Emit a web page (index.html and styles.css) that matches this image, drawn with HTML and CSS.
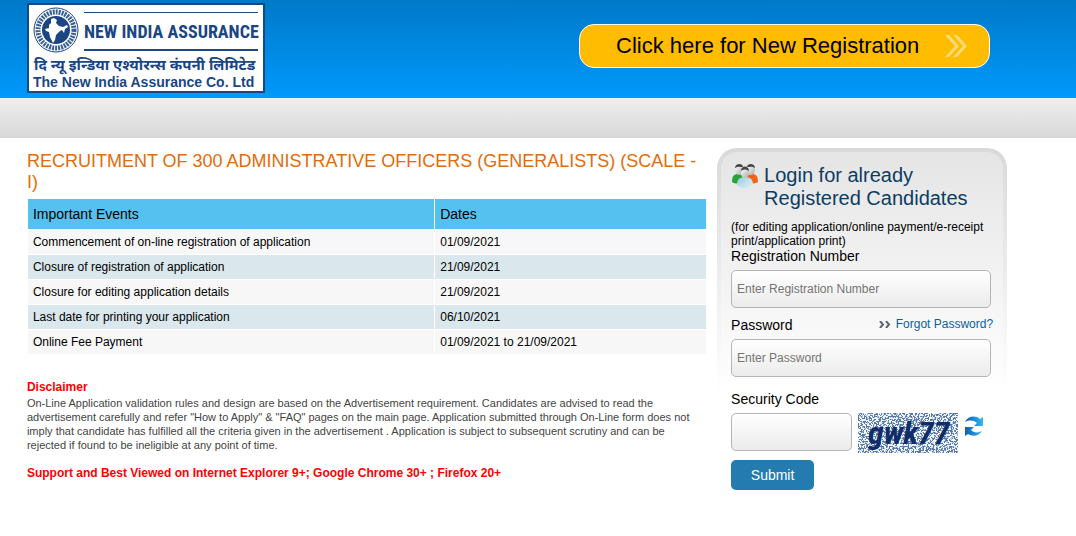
FILE: index.html
```
<!DOCTYPE html>
<html lang="en">
<head>
	<meta charset="utf-8">
	<meta name="viewport" content="width=device-width, initial-scale=1">
	<title>The New India Assurance Co. Ltd</title>
	<link rel="stylesheet" href="styles.css">
</head>
<body>
	<header class="header">
		<div class="wrap header-in">
			<svg class="logo" width="238" height="90" viewBox="0 0 238 90" role="img" aria-label="New India Assurance">
				<rect x="1" y="1" width="236" height="88" fill="#fff" stroke="#1a4684" stroke-width="2"/>
				<circle cx="29" cy="27" r="22" fill="#fff" stroke="#1a4684"/>
				<circle cx="29" cy="27" r="18" fill="none" stroke="#3a609a" stroke-width="5" stroke-dasharray="2 1"/>
				<circle cx="29" cy="27" r="14" fill="#1a4684"/>
				<path fill="#fff" d="M24 16l3-1 3 2-1 3 3 3 4 1 4-2 1 2-3 2-1 4-2-3-2 1-4 4-1 5-2 3-3-6-1-5-3-1-1-2 4-1 0-3 2-2z"/>
				<path stroke="#1a4684" d="M57 9.500h174"/>
				<path stroke="#1a4684" stroke-width="2" d="M57 47h174"/>
				<text class="logo-name" x="57" y="35">NEW INDIA ASSURANCE</text>
				<text class="logo-hindi" x="7" y="67">दि न्यू इन्डिया एश्योरन्स कंपनी लिमिटेड</text>
				<text class="logo-sub" x="6" y="84">The New India Assurance Co. Ltd</text>
			</svg>
			<a class="register" href="#">
				<span>Click here for New Registration</span>
				<svg width="22" height="22" viewBox="0 0 22 22" fill="#ffdb78"><path d="M0 0h4l10 11L4 22H0l10-11zM8 0h4l10 11-10 11H8l10-11z"/></svg>
			</a>
		</div>
	</header>
	<div class="bar"></div>
	<main class="wrap content">
		<section class="info">
			<h1>RECRUITMENT OF 300 ADMINISTRATIVE OFFICERS (GENERALISTS) (SCALE - I)</h1>
			<table class="events">
				<thead>
					<tr><th class="ev">Important Events</th><th>Dates</th></tr>
				</thead>
				<tbody>
					<tr><td>Commencement of on-line registration of application</td><td>01/09/2021</td></tr>
					<tr><td>Closure of registration of application</td><td>21/09/2021</td></tr>
					<tr><td>Closure for editing application details</td><td>21/09/2021</td></tr>
					<tr><td>Last date for printing your application</td><td>06/10/2021</td></tr>
					<tr><td>Online Fee Payment</td><td>01/09/2021 to 21/09/2021</td></tr>
				</tbody>
			</table>
			<h2 class="red">Disclaimer</h2>
			<p class="disclaimer">On-Line Application validation rules and design are based on the Advertisement requirement. Candidates are advised to read the advertisement carefully and refer "How to Apply" &amp; "FAQ" pages on the main page. Application submitted through On-Line form does not imply that candidate has fulfilled all the criteria given in the advertisement . Application is subject to subsequent scrutiny and can be rejected if found to be ineligible at any point of time.</p>
			<p class="red support">Support and Best Viewed on Internet Explorer 9+; Google Chrome 30+ ; Firefox 20+</p>
		</section>
		<form class="login" action="#" method="post">
			<div class="login-head">
				<svg width="28" height="24" viewBox="0 0 28 24">
					<defs>
						<linearGradient id="hd" x1="0" y1="0" x2="1" y2="1"><stop offset="0" stop-color="#fff"/><stop offset="1" stop-color="#aaa"/></linearGradient>
						<linearGradient id="bd" x1="0" y1="0" x2="1" y2="1"><stop offset="0" stop-color="#9cc9dc"/><stop offset="1" stop-color="#dff4fc"/></linearGradient>
					</defs>
					<path fill="#27a53a" d="M1 18c0-6 2-8 6-8s6 2 6 8c-4 2-9 2-12 0z"/>
					<path fill="#f2641c" d="M15 18c0-6 2-8 6-8s6 2 6 8c-4 2-9 2-12 0z"/>
					<ellipse cx="8" cy="6" rx="4" ry="5" fill="url(#hd)"/>
					<path fill="#444" d="M4 4c0-5 8-5 8-1-3 0-5-1-8 1z"/>
					<ellipse cx="20" cy="6" rx="4" ry="5" fill="url(#hd)"/>
					<path fill="#444" d="M16 3c0-4 8-4 8 1-3-2-5-1-8-1z"/>
					<path fill="url(#bd)" d="M6 21c0-6 3-8 8-8s8 2 8 8c-4 4-12 4-16 0z"/>
					<ellipse cx="14" cy="9" rx="4" ry="5" fill="url(#hd)"/>
					<path fill="#444" d="M10 7c0-6 8-6 8 0-3-2-5-2-8 0z"/>
				</svg>
				<h2>Login for already Registered Candidates</h2>
			</div>
			<p class="note">(for editing application/online payment/e-receipt print/application print)</p>
			<label for="regno">Registration Number</label>
			<input id="regno" name="regno" type="text" placeholder="Enter Registration Number">
			<div class="pass-row">
				<label for="pass">Password</label>
				<a href="#">
					<svg width="12" height="7" viewBox="0 0 12 7" fill="none" stroke="#5b6573" stroke-width="2"><path d="M1 0l3 3.500L1 7M7 0l3 3.500L7 7"/></svg>
					Forgot Password?
				</a>
			</div>
			<input id="pass" name="pass" type="password" placeholder="Enter Password">
			<label class="code-label" for="code">Security Code</label>
			<div class="code-row">
				<input id="code" name="code" type="text">
				<svg class="captcha" width="100" height="40" viewBox="0 0 100 40">
					<filter id="noise" x="0" y="0" width="1" height="1">
						<feTurbulence type="fractalNoise" baseFrequency=".6" numOctaves="2" seed="7"/>
						<feColorMatrix values="0 0 0 0 .1  0 0 0 0 .18  0 0 0 0 .42  14 0 0 0 -6.600"/>
					</filter>
					<rect width="100" height="40" fill="#f2fbff"/>
					<rect width="100" height="40" filter="url(#noise)"/>
					<text x="10" y="31">gwk77</text>
				</svg>
				<button class="refresh" type="button" aria-label="Refresh code">
					<svg width="20" height="20" viewBox="0 0 20 20">
						<defs><linearGradient id="rf" x1="0" x2="1"><stop offset="0" stop-color="#0a5fb4"/><stop offset="1" stop-color="#35b8f2"/></linearGradient></defs>
						<path fill="url(#rf)" d="M1 6c3-6 10-7 15-3l3-2v9h-9l3-3c-4-3-8-3-12-1z"/>
						<path fill="url(#rf)" d="M18 15c-3 5-9 6-14 3l-3 2v-9h9l-3 3c3 3 7 3 11 1z"/>
					</svg>
				</button>
			</div>
			<button class="submit" type="submit">Submit</button>
		</form>
	</main>
</body>
</html>
```
FILE: styles.css
```
*{box-sizing:border-box;}
body{
	margin:0;
	background:#fff;
	color:#000;
	font-family:"Liberation Sans", Arial, sans-serif;
	font-size:12px;
}
h1,h2,p{margin:0;font-weight:normal;}
a{text-decoration:none;}
svg{display:block;flex:none;}
.wrap{width:95%;margin:0 auto;}

/* header */
.header{background:linear-gradient(#0079c8,#0099fb);}
.header-in{
	display:flex;
	justify-content:space-between;
	align-items:flex-start;
	padding:3px 59px 5px 0;
}
.logo text{fill:#1a4684;font-weight:bold;}
.logo .logo-name{font-family:"Liberation Sans Narrow", "Roboto Condensed", "Open Sans Condensed", "Liberation Sans", sans-serif;font-size:18px;}
.logo .logo-hindi{font-family:"Noto Sans Devanagari", "Noto Sans", sans-serif;font-size:15px;}
.logo .logo-sub{font-size:14px;}
.register{
	display:flex;
	justify-content:space-between;
	align-items:center;
	width:411px;
	height:44px;
	margin-top:21px;
	padding:0 22px 0 36px;
	border:1px solid #fff;
	border-radius:15px;
	background:#ffbc00;
	color:#000;
	font-size:22px;
}
.bar{height:40px;background:linear-gradient(#efefef,#d7d7d7);}

/* left column */
.content{
	display:flex;
	align-items:flex-start;
	gap:10px;
	padding:10px 42px 10px 0;
}
.info{flex:1;}
.info h1{
	padding-top:3px;
	color:#e36c0a;
	font-size:18px;
	line-height:21px;
}
.events{
	width:100%;
	margin-top:5px;
	border-spacing:1px;
	font-size:12px;
}
.events th,.events td{padding:0 5px;text-align:left;}
.events th{height:30px;background:#55c1f1;font-size:14px;font-weight:normal;}
.events td{height:24px;background:#f7f7f7;}
.events tr:nth-child(even) td{background:#dae7ed;}
.events .ev{width:60%;}
.red{color:#f00;font-size:12px;font-weight:bold;line-height:14px;}
.info h2{margin-top:25px;}
.disclaimer{margin-top:2px;padding-right:10px;color:#444;font-size:11px;line-height:14px;}
.support{margin-top:14px;}

/* login box */
.login{
	width:290px;
	padding:10px;
	border:4px solid transparent;
	border-radius:20px;
	background:
		linear-gradient(#e5e5e5,#fff 240px) padding-box,
		linear-gradient(#d9d9d9,#fff 245px) border-box;
}
.login-head{display:flex;gap:5px;}
.login-head svg{margin-top:2px;}
.login h2{padding-top:2px;color:#0b3d62;font-size:20px;line-height:23px;}
.note{margin-top:10px;line-height:14px;}
.login label{display:block;font-size:14px;line-height:16px;}
.login input{
	display:block;
	width:260px;
	height:38px;
	padding:0 5px;
	border:1px solid #b5b5b5;
	border-radius:5px;
	background:linear-gradient(#fff,#ebebeb);
	font-family:inherit;
	font-size:12px;
}
.login #regno{margin-top:6px;}
.login #pass{margin-top:6px;}
.login input::placeholder{color:#757575;}
.pass-row{display:flex;justify-content:space-between;margin-top:9px;}
.pass-row a{
	display:flex;
	align-items:center;
	gap:5px;
	height:14px;
	color:#0a62a0;
	white-space:nowrap;
}
.login .code-label{margin-top:14px;}
.code-row{display:flex;align-items:flex-start;gap:6px;margin-top:6px;}
.code-row #code{width:121px;}
.captcha text{fill:#102d68;font-family:"Roboto Condensed", "DejaVu Sans Mono", sans-serif;font-size:32px;font-weight:bold;font-style:italic;}
.refresh{margin-top:3px;padding:0;border:0;background:none;cursor:pointer;}
.submit{
	width:83px;
	height:30px;
	margin-top:7px;
	border:0;
	border-radius:5px;
	background:#237bb0;
	color:#fff;
	font-family:inherit;
	font-size:14px;
}
```
